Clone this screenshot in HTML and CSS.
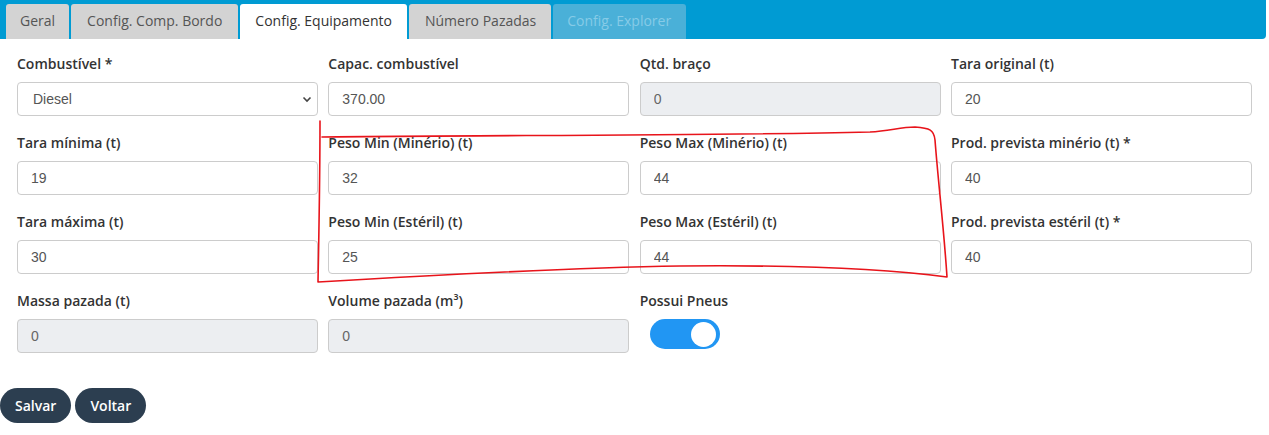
FILE: index.html
```html
<!DOCTYPE html>
<html>
<head>
  <meta charset="UTF-8">
  <meta name="viewport" content="width=device-width, initial-scale=1.0">
  <title>Config. Equipamento</title>
  <link rel="stylesheet" href="styles.css">
</head>
<body>
  <div class="page">
    <ul class="tabs">
      <li class="tab">Geral</li>
      <li class="tab">Config. Comp. Bordo</li>
      <li class="tab active">Config. Equipamento</li>
      <li class="tab">Número Pazadas</li>
      <li class="tab disabled">Config. Explorer</li>
    </ul>

    <form class="form-grid">
      <div class="field">
        <label>Combustível *</label>
        <div class="select-wrap">
          <select class="input select">
            <option>Diesel</option>
          </select>
          <svg class="chevron" width="10" height="7" viewBox="0 0 10 7"><path d="M1.5 1.5 L5 5 L8.5 1.5" fill="none" stroke="#444" stroke-width="1.6"/></svg>
        </div>
      </div>
      <div class="field">
        <label>Capac. combustível</label>
        <input class="input" type="text" value="370.00">
      </div>
      <div class="field">
        <label>Qtd. braço</label>
        <input class="input" type="text" value="0" disabled>
      </div>
      <div class="field">
        <label>Tara original (t)</label>
        <input class="input" type="text" value="20">
      </div>

      <div class="field">
        <label>Tara mínima (t)</label>
        <input class="input" type="text" value="19">
      </div>
      <div class="field">
        <label>Peso Min (Minério) (t)</label>
        <input class="input" type="text" value="32">
      </div>
      <div class="field">
        <label>Peso Max (Minério) (t)</label>
        <input class="input" type="text" value="44">
      </div>
      <div class="field">
        <label>Prod. prevista minério (t) *</label>
        <input class="input" type="text" value="40">
      </div>

      <div class="field">
        <label>Tara máxima (t)</label>
        <input class="input" type="text" value="30">
      </div>
      <div class="field">
        <label>Peso Min (Estéril) (t)</label>
        <input class="input" type="text" value="25">
      </div>
      <div class="field">
        <label>Peso Max (Estéril) (t)</label>
        <input class="input" type="text" value="44">
      </div>
      <div class="field">
        <label>Prod. prevista estéril (t) *</label>
        <input class="input" type="text" value="40">
      </div>

      <div class="field">
        <label>Massa pazada (t)</label>
        <input class="input" type="text" value="0" disabled>
      </div>
      <div class="field">
        <label>Volume pazada (m³)</label>
        <input class="input" type="text" value="0" disabled>
      </div>
      <div class="field">
        <label>Possui Pneus</label>
        <div class="switch on"><span class="knob"></span></div>
      </div>
    </form>

    <div class="actions">
      <button class="btn" type="button">Salvar</button>
      <button class="btn" type="button">Voltar</button>
    </div>

    <!-- marcação feita à mão por cima da tela -->
    <svg class="annotation" width="1269" height="435" viewBox="0 0 1269 435">
      <path d="M320 121 C320 170 319 230 318 282 C420 276 560 268 680 266 C780 265 880 268 947 277 C944 230 938 180 935 140 C934 130 930 128 915 127 C900 127 890 131 870 132 C700 136 480 135 322 137"
            fill="none" stroke="#e8141b" stroke-width="1.6" stroke-linejoin="round" stroke-linecap="round"/>
    </svg>
  </div>
</body>
</html>
```

FILE: styles.css
```css
body {
  margin: 0;
  font-family: "Open Sans", sans-serif;
  font-size: 14px;
  color: #333;
  background: #fff;
}
.page {
  position: relative;
  width: 1269px;
  height: 435px;
}
.tabs {
  display: flex;
  gap: 2px;
  margin: 0;
  padding: 4px 0 0 6px;
  width: 1260px;
  height: 35px;
  list-style: none;
  background-color: #009bd3;
  border-bottom-right-radius: 4px;
}
.tab {
  height: 35px;
  line-height: 34px;
  padding: 0 15px;
  background-color: #d3d3d3;
  color: #555;
  border-radius: 3px 3px 0 0;
}
.tab:first-child {
  padding: 0 14px;
}
.tab:nth-child(2) {
  padding: 0 16px;
}
.tab:nth-child(4) {
  padding: 0 15px 0 16px;
}
.tab.active {
  background-color: #fff;
  color: #333;
}
.tab.disabled {
  background-color: #4ab0d8;
  color: #86cbe7;
  padding: 0 15px 0 14px;
}
.form-grid {
  display: grid;
  grid-template-columns: repeat(4, 301px);
  column-gap: 10.33px;
  row-gap: 17px;
  padding: 15px 0 0 17px;
  margin: 0;
}
.field label {
  display: block;
  font-weight: 600;
  font-size: 14px;
  line-height: 20px;
  margin-bottom: 8px;
  color: #333;
}
.input {
  box-sizing: border-box;
  width: 100%;
  height: 34px;
  padding: 0 13px;
  border: 1px solid #ccc;
  border-radius: 4px;
  background-color: #fff;
  font-family: "Liberation Sans", Arial, sans-serif;
  font-size: 14px;
  color: #555;
  outline: none;
}
.input:disabled {
  background-color: #eceef1;
  color: #666;
}
.select-wrap {
  position: relative;
}
.select {
  appearance: none;
  -webkit-appearance: none;
  padding-left: 15px;
}
.chevron {
  position: absolute;
  right: 6px;
  top: 14px;
}
.switch {
  width: 70px;
  height: 30px;
  margin-left: 10px;
  margin-top: 2px;
  border-radius: 15px;
  background-color: #d0d0d0;
  display: flex;
  align-items: center;
  padding: 0 4px;
  box-sizing: border-box;
}
.switch.on {
  background-color: #2196f3;
  justify-content: flex-end;
}
.knob {
  width: 25px;
  height: 25px;
  border-radius: 50%;
  background-color: #fff;
}
.actions {
  display: flex;
  gap: 4px;
  margin-top: 35px;
}
.btn {
  height: 35px;
  padding: 0 15px;
  border: none;
  border-radius: 18px;
  background-color: #2c3e50;
  color: #fff;
  font-family: "Open Sans", sans-serif;
  font-size: 14px;
  font-weight: 600;
  cursor: pointer;
}
.annotation {
  position: absolute;
  left: 0;
  top: 0;
  pointer-events: none;
}
```
